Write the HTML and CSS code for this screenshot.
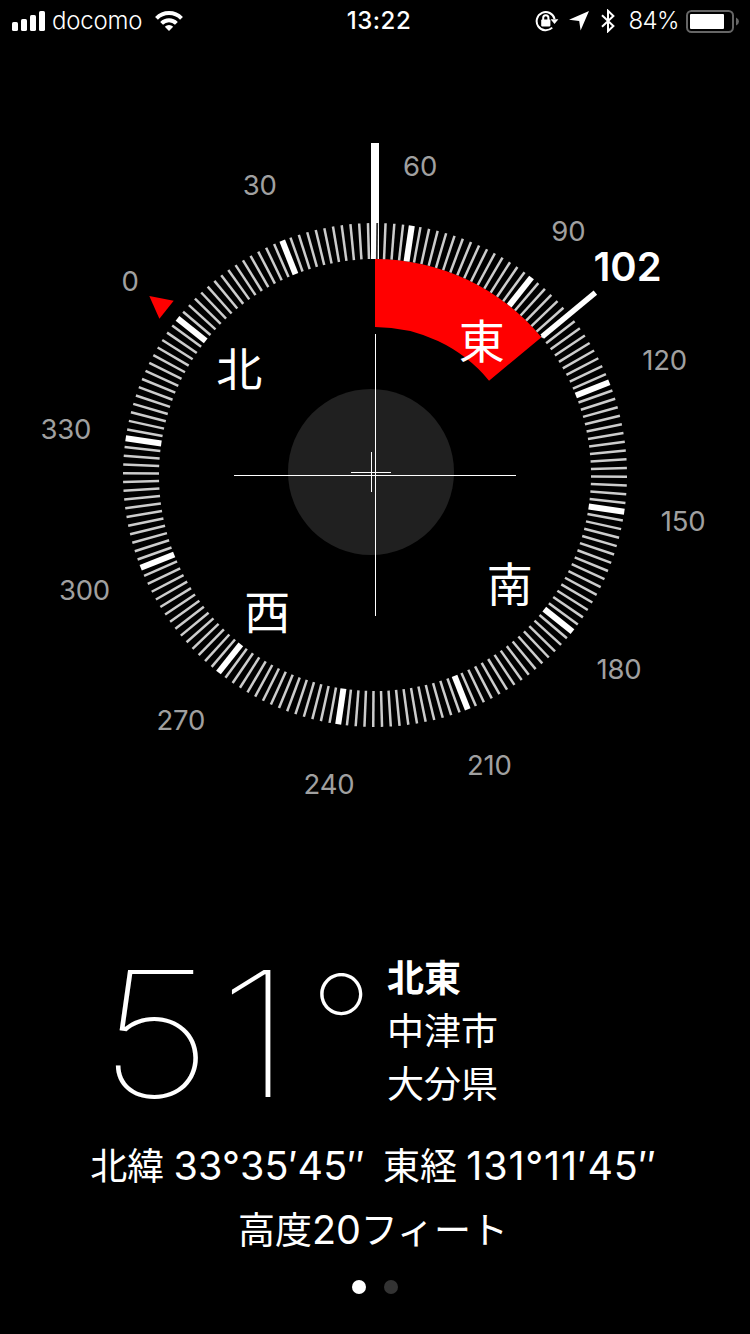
FILE: index.html
```
<!DOCTYPE html>
<html lang="ja">
<head>
    <meta charset="UTF-8">
    <meta name="viewport" content="width=device-width, initial-scale=1.0">
    <title>コンパス</title>
    <link rel="stylesheet" href="styles.css">
</head>
<body>

    <header class="status-bar">
        <div class="status-left">
            <svg class="signal" width="34" height="20" viewBox="0 0 34 20">
                <rect x="0" y="11" width="6" height="9" rx="1.6"/>
                <rect x="9" y="8" width="6" height="12" rx="1.6"/>
                <rect x="18" y="4" width="6" height="16" rx="1.6"/>
                <rect x="27" y="0" width="6" height="20" rx="1.6"/>
            </svg>
            <span class="carrier">docomo</span>
            <svg class="wifi" width="28" height="20" viewBox="0 0 28 20">
                <path d="M14 20 L9.8 15.8 A6 6 0 0 1 18.2 15.8 Z"/>
                <path class="arc" d="M6.6 12.4 A10.4 10.4 0 0 1 21.4 12.4"/>
                <path class="arc" d="M1.5 7.3 A17.6 17.6 0 0 1 26.5 7.3"/>
            </svg>
        </div>
        <div class="clock">13:22</div>
        <div class="status-right">
            <svg class="lock" width="24" height="22" viewBox="0 0 24 22">
                <path class="ring" d="M17.2 17.6 A9.1 9.1 0 1 1 19.6 9"/>
                <path d="M15.6 9.2 L23.4 9.2 L19.5 14 Z"/>
                <rect x="6.2" y="9.6" width="9.2" height="6.8" rx="0.8"/>
                <path class="shackle" d="M8.2 10 V7.8 A2.6 2.6 0 0 1 13.4 7.8 V10"/>
            </svg>
            <svg class="arrow" width="20" height="20" viewBox="0 0 20 20">
                <path d="M20 0 L11.6 19.4 L10.2 10 L0 8.8 Z"/>
            </svg>
            <svg class="bluetooth" width="14" height="24" viewBox="0 0 14 24">
                <path d="M1 6.3 L12.4 17 L7 22.2 V1.8 L12.4 7 L1 17.7"/>
            </svg>
            <span class="percent">84%</span>
            <svg class="battery" width="54" height="23" viewBox="0 0 54 23">
                <rect class="case" x="1" y="1" width="46" height="21" rx="4.5"/>
                <rect x="4" y="4" width="34" height="15" rx="1"/>
                <path class="cap" d="M50 7.5 Q53 9 53 11.5 Q53 14 50 15.5 Z"/>
            </svg>
        </div>
    </header>

    <main>
        <svg id="compass" class="compass" width="750" height="760" viewBox="-375 -395 750 760">
            <circle class="level" cx="-4" cy="-3" r="83"/>
            <path id="arc" class="deviation"/>
            <g id="ticks"></g>
            <path class="pointer" d="M-4 -332 H4 V-216 H-4 Z"/>
            <path class="pointer-gap" d="M2.2 -252 L1.8 -216"/>
            <path id="north" class="north" d="M0 -288 L-11.5 -266 H11.5 Z"/>
            <line id="bearing" class="bearing" x1="0" y1="-217" x2="0" y2="-286"/>
            <g id="labels"></g>
            <text class="bearing-text" x="252.5" y="-194">102</text>
            <path class="cross" d="M-141 0.5 H141 M0.5 -141 V141 M-24 -2.5 H16 M-3.5 -23 V17"/>
        </svg>

        <div class="reading">
            <div class="degrees"><span class="five">5</span><span class="one">1</span><span class="deg">°</span></div>
            <div class="place">
                <div class="direction">北東</div>
                <div>中津市</div>
                <div>大分県</div>
            </div>
        </div>

        <div class="coords"><span>北緯 <b>33°35′45″</b></span><span>東経 <b class="lng">131°11′45″</b></span></div>
        <div class="altitude">高度<b>20</b>フィート</div>

        <div class="pager">
            <i class="dot on"></i>
            <i class="dot"></i>
        </div>
    </main>

    <script>
        const heading = 51.6;
        const locked = 102;

        // 円周上の点、0°が真上
        function point(deg, r) {
            const a = (deg - heading) * Math.PI / 180;
            return [r * Math.sin(a), -r * Math.cos(a)];
        }

        let ticks = "";
        let labels = "";
        for (let d = 0; d < 360; d += 2) {
            const [x1, y1] = point(d, 216);
            const [x2, y2] = point(d, 252);
            ticks += `<line class="${d % 30 ? 'tick' : 'tick major'}" x1="${x1}" y1="${y1}" x2="${x2}" y2="${y2}"/>`;
            if (d % 30 === 0) {
                const [x, y] = point(d, 312);
                labels += `<text class="num" x="${x - 0.5}" y="${y + 10}">${d}</text>`;
            }
        }
        ['北', '東', '南', '西'].forEach((name, i) => {
            const [x, y] = point(i * 90, 172.5);
            labels += `<text class="cardinal" x="${x - 0.5}" y="${y + 18.5}">${name}</text>`;
        });
        document.getElementById('ticks').innerHTML = ticks;
        document.getElementById('labels').innerHTML = labels;

        const [ox, oy] = point(locked, 216);
        const [ix, iy] = point(locked, 148);
        document.getElementById('arc').setAttribute('d', `M0 -216 A216 216 0 0 1 ${ox} ${oy} L${ix} ${iy} A148 148 0 0 0 0 -148 Z`);
        document.getElementById('bearing').setAttribute('transform', `rotate(${locked - heading})`);
        document.getElementById('north').setAttribute('transform', `rotate(${-heading})`);
    </script>
</body>
</html>
```
FILE: styles.css
```
* { box-sizing: border-box; }
body { background: #000; color: #fff; font-family: Inter, "Noto Sans CJK JP", sans-serif; margin: 0; height: 1334px; overflow: hidden; }
svg { display: block; fill: #fff; }

/* STATUS BAR */
.status-bar { height: 40px; padding: 0 10px 0 12px; display: grid; grid-template-columns: 1fr auto 1fr; align-items: center; font-size: 24px; line-height: 42px; }
.status-left, .status-right { display: flex; align-items: center; height: 40px; }
.status-right { justify-content: flex-end; }
.carrier { margin-left: 6px; font-weight: 350; letter-spacing: -0.2px; }
.wifi { margin-left: 13px; }
.wifi .arc { fill: none; stroke: #fff; stroke-width: 4; }
.clock { font-weight: 550; font-size: 24px; letter-spacing: 0.5px; padding-left: 6px; }
.lock .ring, .lock .shackle { fill: none; stroke: #fff; stroke-width: 2; }
.lock { margin-right: -1px; }
.arrow { margin-left: 11px; }
.bluetooth { margin-left: 12px; fill: none; stroke: #fff; stroke-width: 2; }
.percent { margin-left: 14px; font-weight: 350; letter-spacing: -0.6px; }
.battery { margin-left: 7px; }
.battery .case { fill: none; stroke: #666; stroke-width: 2; }
.battery .cap { fill: #666; }

/* COMPASS */
main { padding-top: 40px; }
.level { fill: #202020; }
.deviation, .north { fill: #f00; }
.tick { stroke: #ccc; stroke-width: 2.5; }
.tick.major { stroke: #fff; stroke-width: 6; }
.pointer-gap { stroke: #333; stroke-width: 1.8; }
.bearing { stroke: #fff; stroke-width: 5.5; }
.cross { stroke: #fff; stroke-width: 1; fill: none; shape-rendering: crispEdges; }
.compass text { text-anchor: middle; }
.num { font-size: 27.5px; fill: #a0a0a0; font-weight: 380; letter-spacing: -0.2px; }
.cardinal { font-size: 46px; font-family: "Noto Sans CJK JP", sans-serif; font-weight: 400; }
.bearing-text { font-size: 40px; font-weight: 600; }

/* READING */
.reading { display: flex; margin-top: 109px; padding-left: 106px; height: 160px; }
.degrees { width: 281px; display: flex; font-size: 175px; line-height: 168px; font-weight: 100; }
.degrees span { transform-origin: left; }
.five { transform: translateX(-7px) scaleX(1.15); }
.one { transform: translateX(12px) scaleX(1.2); }
.deg { font-size: 142px; line-height: 154px; margin-left: 40px; font-weight: 140; }
.place { font-size: 37px; line-height: 53px; font-weight: 400; font-family: "Noto Sans CJK JP", sans-serif; padding-top: 1px; }
.direction { font-weight: 700; }

.coords { display: flex; justify-content: center; gap: 18px; margin-top: 27px; padding-right: 3px; font-size: 37px; line-height: 60px; font-weight: 400; word-spacing: -1px; }
.altitude { text-align: center; padding-right: 4px; font-size: 37px; line-height: 60px; font-weight: 400; margin-top: 3px; }
b { font-weight: 400; font-size: 39.5px; letter-spacing: 0.1px; }
.lng { letter-spacing: 0.8px; }
.altitude b { font-size: 39.5px; letter-spacing: -0.2px; }

.pager { display: flex; justify-content: center; gap: 18px; margin-top: 19px; }
.dot { width: 14px; height: 14px; border-radius: 50%; background: #333; }
.dot.on { background: #fff; }
```
